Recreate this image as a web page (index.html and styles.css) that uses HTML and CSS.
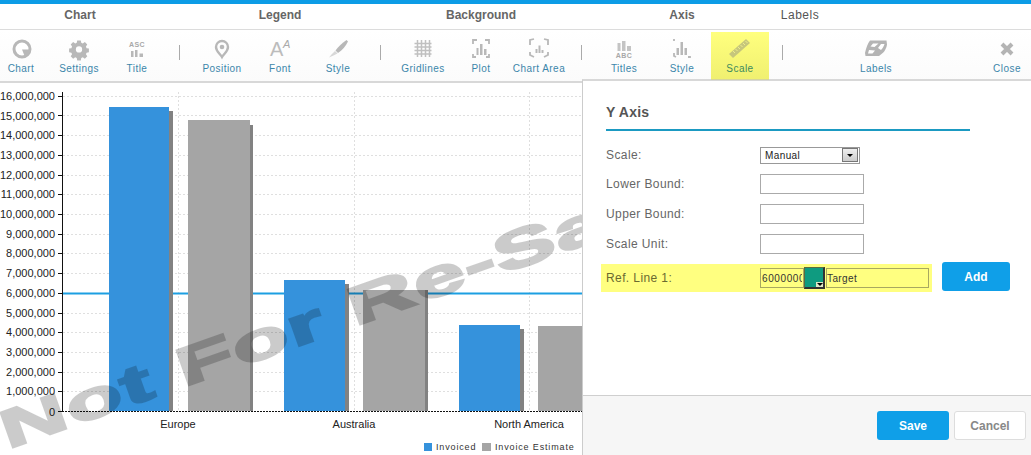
FILE: index.html
```html
<!DOCTYPE html>
<html lang="en">
<head>
<meta charset="utf-8">
<title>Chart Builder</title>
<link rel="stylesheet" href="styles.css">
</head>
<body>
<div class="app">
  <nav class="tabs">
    <span class="tab tab-chart">Chart</span>
    <span class="tab tab-legend">Legend</span>
    <span class="tab tab-background">Background</span>
    <span class="tab tab-axis">Axis</span>
    <span class="tab tab-labels">Labels</span>
  </nav>
  <div class="toolbar">
    <div class="tool"><svg class="icon" viewBox="0 0 28 26"><circle class="ico-ring" cx="15" cy="14" r="8"/><path class="ico-fill" d="M15 14.500h8a8 8 0 0 1-5 7.500z"/></svg><span>Chart</span></div>
    <div class="tool"><svg class="icon" viewBox="0 0 28 26"><path class="ico-fill" fill-rule="evenodd" d="M12 4h4l.5 2.700 1.700.7 2.300-1.500 2.700 2.700-1.500 2.300.7 1.700 2.600.5v4l-2.600.5-.7 1.700 1.500 2.300-2.700 2.700-2.300-1.500-1.700.7-.5 2.700h-4l-.5-2.700-1.700-.7-2.300 1.500-2.700-2.700 1.500-2.300-.7-1.700-2.600-.5v-4l2.600-.5.7-1.700-1.500-2.300 2.700-2.700 2.300 1.500 1.700-.7zM14 10.500a3.500 3.500 0 1 0 0 7 3.500 3.500 0 0 0 0-7z" transform="translate(1.400 1.800) scale(.9)"/></svg><span>Settings</span></div>
    <div class="tool"><svg class="icon" viewBox="0 0 28 26"><text class="ico-text" x="14" y="12" text-anchor="middle">ASC</text><path class="ico-fill" d="M8 16h2.500v6H8zM12 15h2.500v7H12zM16.500 18.500h3.500V22h-3.500z"/></svg><span>Title</span></div>
    <i class="sep"></i>
    <div class="tool"><svg class="icon" viewBox="0 0 28 26"><path class="ico-line" d="M14 22c-2-3.500-6-5.500-6-10a6 6 0 0 1 12 0c0 4.500-4 6.500-6 10z"/><circle class="ico-fill" cx="14" cy="12" r="2.300"/></svg><span>Position</span></div>
    <div class="tool"><svg class="icon" viewBox="0 0 28 26"><text class="ico-big" x="4" y="21">A</text><text class="ico-small" x="17" y="13">A</text></svg><span>Font</span></div>
    <div class="tool"><svg class="icon" viewBox="0 0 28 26"><path class="ico-fill" d="M22.500 5l1.500 1.500c-2 4.500-6 9-10 11.500l-2.500-2.500c3-4 7-8 11-10.500z"/><path class="ico-pale" d="M11 16l2.500 2.500-4 2-4.500 2 2.500-3z"/></svg><span>Style</span></div>
    <i class="sep"></i>
    <div class="tool"><svg class="icon" viewBox="0 0 28 26"><path class="ico-grid" d="M8.500 5v17M12.500 5v17M16.500 5v17M20.500 5v17M5.500 8.500h17M5.500 12h17M5.500 15.500h17M5.500 19h17"/></svg><span>Gridlines</span></div>
    <div class="tool"><svg class="icon" viewBox="0 0 28 26"><path class="ico-dash" d="M6 9V5h4M18 5h4v4M22 19v3h-3M9 22H6v-3"/><path class="ico-fill" d="M9.500 13h2v7h-2zM13 9h2.500v11H13zM17 14h2.500v6H17z"/></svg><span>Plot</span></div>
    <div class="tool"><svg class="icon" viewBox="0 0 28 26"><path class="ico-dash" d="M5 10V5l4-1M19 4l4 1v5M23 17v3l-4 2M9 22l-4-2v-3"/><path class="ico-fill" d="M10.500 14h2v4h-2zM13.500 10.500h2V18h-2zM16.500 15h2v3h-2z"/></svg><span>Chart Area</span></div>
    <i class="sep"></i>
    <div class="tool"><svg class="icon" viewBox="0 0 28 26"><path class="ico-pale2" d="M7.500 8h3v8h-3zM12 6h3.500v10H12zM17 11h4v5h-4z"/><text class="ico-text" x="14" y="23" text-anchor="middle">ABC</text></svg><span>Titles</span></div>
    <div class="tool"><svg class="icon" viewBox="0 0 28 26"><path class="ico-dash" d="M6 6V4M6 18v3l2 1M22 21v1h-2"/><path class="ico-fill" d="M8.500 13h2.500v7H8.500zM12.500 7H15v13h-2.500zM16.500 13H19v7h-2.500z"/></svg><span>Style</span></div>
    <div class="tool tool-active"><svg class="icon" viewBox="0 0 28 26"><path class="ico-ruler" d="M3 19L20 4l4 4L7 23z"/><path class="ico-ticks" d="M7 16l2 2M9.500 14l2 2M12 12l2 2M14.500 10l2 2M17 8l2 2M19.500 6l2 2"/></svg><span>Scale</span></div>
    <i class="sep"></i>
    <div class="tool tool-labels"><svg class="icon" viewBox="0 0 28 26"><path class="ico-shape" d="M8 5.500h16.500l.5 4c-.5 4-3 8-5.500 9.500l-2.500 2H3.500l-.5-3c1-5 3-10 5-12.500z"/><path class="ico-cut" d="M11 8.500h5.500l-4 3.500-4-.5zM7 15l6 .5-2.500 3H6zM19 9h3.500c-.5 2-2 4.500-3.500 6l-3-2z"/></svg><span>Labels</span></div>
    <div class="tool tool-close"><svg class="icon" viewBox="0 0 28 26"><path class="ico-x" d="M9 9l10 10M19 9L9 19"/></svg><span>Close</span></div>
  </div>

  <main class="chart">
    <svg class="plot" viewBox="0 83 582 372" width="582" height="372">
      <path class="grid" d="M63 96.500H582M63 115.500H582M63 135.500H582M63 155.500H582M63 175.500H582M63 194.500H582M63 214.500H582M63 234.500H582M63 253.500H582M63 273.500H582M63 313.500H582M63 332.500H582M63 352.500H582M63 372.500H582M63 391.500H582"/>
      <path class="grid" d="M178.500 92V411M354.500 92V411M529.500 92V411"/>
      <line class="ref" x1="62" y1="293.500" x2="582" y2="293.500"/>
      <path class="base" d="M62 411.500H582"/>
      <path class="ticks" d="M62.500 92V412M58 96.500h4M58 115.500h4M58 135.500h4M58 155.500h4M58 175.500h4M58 194.500h4M58 214.500h4M58 234.500h4M58 253.500h4M58 273.500h4M58 293.500h4M58 313.500h4M58 332.500h4M58 352.500h4M58 372.500h4M58 391.500h4M58 411.500h4"/>

      <rect class="shadow" x="113" y="111" width="60" height="300"/>
      <rect class="blue" x="109" y="107" width="60" height="304"/>
      <rect class="shadow" x="192" y="125" width="61" height="286"/>
      <rect class="gray" x="188" y="120" width="62" height="291"/>
      <rect class="shadow" x="288" y="284" width="61" height="127"/>
      <rect class="blue" x="284" y="280" width="61" height="131"/>
      <rect class="shadow" x="367" y="290" width="61" height="121"/>
      <rect class="gray" x="363" y="290" width="62" height="121"/>
      <rect class="shadow" x="463" y="329" width="61" height="82"/>
      <rect class="blue" x="459" y="325" width="61" height="86"/>
      <rect class="gray" x="538" y="326" width="44" height="85"/>

      <g class="ylabels">
        <text x="55" y="100">16,000,000</text>
        <text x="55" y="120">15,000,000</text>
        <text x="55" y="139">14,000,000</text>
        <text x="55" y="159">13,000,000</text>
        <text x="55" y="179">12,000,000</text>
        <text x="55" y="198">11,000,000</text>
        <text x="55" y="218">10,000,000</text>
        <text x="55" y="238">9,000,000</text>
        <text x="55" y="257">8,000,000</text>
        <text x="55" y="277">7,000,000</text>
        <text x="55" y="297">6,000,000</text>
        <text x="55" y="317">5,000,000</text>
        <text x="55" y="336">4,000,000</text>
        <text x="55" y="356">3,000,000</text>
        <text x="55" y="376">2,000,000</text>
        <text x="55" y="395">1,000,000</text>
        <text x="55" y="416">0</text>
      </g>
      <g class="xlabels">
        <text x="178" y="428">Europe</text>
        <text x="354" y="428">Australia</text>
        <text x="529" y="428">North America</text>
      </g>
      <rect class="blue" x="424" y="443" width="8" height="8"/>
      <text class="legend" x="436" y="450">Invoiced</text>
      <rect class="gray" x="482" y="443" width="9" height="8"/>
      <text class="legend" x="495" y="450">Invoice Estimate</text>

      <text class="watermark" transform="translate(8 449) rotate(-19.500) scale(1.6 .92)">Not For Re-Sale</text>
    </svg>
  </main>

  <aside class="panel">
    <div class="panel-body">
      <h2 class="panel-title">Y Axis</h2>
      <div class="row row-select">
        <label class="field-label">Scale:</label>
        <div class="select"><span>Manual</span><b class="select-arrow"></b></div>
      </div>
      <div class="row"><label class="field-label">Lower Bound:</label><input class="input" type="text"></div>
      <div class="row"><label class="field-label">Upper Bound:</label><input class="input" type="text"></div>
      <div class="row"><label class="field-label">Scale Unit:</label><input class="input" type="text"></div>
      <div class="ref-row">
        <div class="ref-band">
          <label class="field-label ref-label">Ref. Line 1:</label>
          <input class="input input-value" type="text" value="6000000">
          <div class="swatch"><b class="swatch-arrow"></b></div>
          <input class="input input-name" type="text" value="Target">
        </div>
        <button class="btn btn-primary btn-add">Add</button>
      </div>
    </div>
    <footer class="panel-footer">
      <button class="btn btn-primary btn-foot">Save</button>
      <button class="btn btn-cancel btn-foot">Cancel</button>
    </footer>
  </aside>
</div>
</body>
</html>
```
FILE: styles.css
```css
* { box-sizing: border-box; }
html, body { margin: 0; height: 100%; }
body {
  background: #fff;
  font-family: "Liberation Sans", Arial, sans-serif;
  overflow: hidden;
}
.app {
  position: relative;
  width: 1031px;
  height: 455px;
  overflow: hidden;
  border-top: 4px solid #0d9ce6;
}

/* tabs */
.tabs {
  display: flex;
  height: 26px;
  border-bottom: 1px solid #dcdcdc;
  align-items: center;
}
.tab {
  text-align: center;
  font-size: 12px;
  font-weight: bold;
  color: #666;
  padding-bottom: 4px;
}
.tab-chart { width: 160px; }
.tab-legend { width: 240px; }
.tab-background { width: 162px; }
.tab-axis { width: 120px; margin-left: 60px; }
.tab-labels { width: 116px; font-weight: normal; color: #555; letter-spacing: .5px; }

/* toolbar */
.toolbar {
  display: flex;
  height: 53px;
  margin-left: -8px;
  padding-top: 2px;
  border-bottom: 2px solid #d8d8d8;
  background: linear-gradient(#fff, #fbfbfb);
}
.tool {
  width: 58px;
  height: 48px;
  display: flex;
  flex-direction: column;
  align-items: center;
  padding-top: 3px;
  font-size: 10px;
  letter-spacing: .45px;
  color: #3b86aa;
}
.tool span { margin-top: 2px; line-height: 12px; white-space: nowrap; }
.icon { width: 28px; height: 26px; display: block; }
.tool-active {
  background: linear-gradient(#ffff7e, #f0f070);
  border-bottom: 1px solid #d6d69a;
  color: #3d8a5f;
  position: relative;
  z-index: 2;
  height: 48px;
}
.tool-labels { margin-left: 51px; }
.tool-close { margin-left: auto; width: 48px; }
.sep {
  width: 1px;
  height: 15px;
  margin: 13px 13px 0;
  background: #aaa;
}

/* icon paints */
.ico-fill { fill: #b8b8b8; }
.ico-pale2 { fill: #c4c4c4; }
.ico-ring { fill: #fff; stroke: #b8b8b8; stroke-width: 3; }
.ico-cut { fill: #fff; }
.ico-text { font-size: 7px; font-weight: bold; fill: #a8a8a8; letter-spacing: .4px; font-family: "Liberation Sans", sans-serif; }
.ico-line { fill: none; stroke: #b8b8b8; stroke-width: 2.400; }
.ico-big { font-size: 20px; fill: #bcbcbc; font-family: "Liberation Sans", sans-serif; }
.ico-small { font-size: 11px; font-style: italic; fill: #aaa; font-family: "Liberation Sans", sans-serif; }
.ico-pale { fill: #d8d8d8; }
.ico-grid { fill: none; stroke: #c0c0c0; stroke-width: 1.500; }
.ico-dash { fill: none; stroke: #b8b8b8; stroke-width: 1.800; }
.ico-ruler { fill: #c6c67c; }
.ico-ticks { fill: none; stroke: #eded8c; stroke-width: 1; }
.ico-shape { fill: #b4b4b4; }
.ico-x { fill: none; stroke: #b4b4b4; stroke-width: 4; }

/* chart */
.chart { width: 582px; height: 372px; }
.plot { display: block; }
.plot text { font-family: "Liberation Sans", Arial, sans-serif; }
.grid { fill: none; stroke: #dfdfdf; stroke-width: 1; stroke-dasharray: 2 2; }
.base { fill: none; stroke: #111; stroke-width: 1; stroke-dasharray: 2 1; }
.ticks { fill: none; stroke: #111; stroke-width: 1; }
.ref { stroke: #1c9fe2; stroke-width: 2; }
.blue { fill: #3592dc; }
.gray { fill: #a5a5a5; }
.shadow { fill: #828282; }
.ylabels text { font-size: 11px; fill: #222; text-anchor: end; }
.xlabels text { font-size: 11px; fill: #222; text-anchor: middle; }
.plot .legend { font-size: 9px; letter-spacing: .85px; fill: #333; }
.plot .watermark {
  font-size: 58px;
  font-weight: bold;
  letter-spacing: 1px;
  fill: #000;
  stroke: #000;
  stroke-width: 2.500px;
  opacity: .2;
}

/* panel */
.panel {
  position: absolute;
  left: 582px;
  top: 75px;
  width: 449px;
  height: 376px;
  background: #fff;
  border-top: 2px solid #d8d8d8;
  border-left: 1px solid #ccc;
  display: flex;
  flex-direction: column;
}
.panel-body { flex: 1; padding: 0 21px 0 18px; }
.panel-title {
  margin: 22px 0 0 5px;
  padding-bottom: 7px;
  width: 364px;
  box-sizing: content-box;
  height: 19px;
  font-size: 14px;
  line-height: 19px;
  font-weight: bold;
  color: #555;
  letter-spacing: .2px;
  border-bottom: 2px solid #1b9ac2;
}
.row {
  display: flex;
  align-items: center;
  height: 30px;
  padding-left: 5px;
}
.row-select { margin-top: 10px; height: 28px; }
.field-label {
  width: 154px;
  font-size: 12px;
  letter-spacing: .4px;
  color: #666;
}
.select {
  width: 100px;
  height: 17px;
  border: 1px solid #999;
  display: flex;
  align-items: center;
  justify-content: space-between;
  padding: 0 1px 0 4px;
  font-size: 10px;
  letter-spacing: .4px;
  color: #222;
}
.select-arrow {
  width: 16px;
  height: 14px;
  background: linear-gradient(#eee, #ccc);
  border: 1px solid #777;
  position: relative;
}
.select-arrow::after {
  content: "";
  position: absolute;
  left: 4px;
  top: 5px;
  border: 3px solid transparent;
  border-top-color: #000;
  border-bottom: 0;
}
.input {
  width: 104px;
  height: 20px;
  border: 1px solid #aaa;
  background: #fff;
  padding: 0 2px;
  font: 10px "Liberation Sans", Arial, sans-serif;
  letter-spacing: .4px;
  color: #333;
  outline: none;
}
.ref-row {
  display: flex;
  align-items: center;
  margin-top: 5px;
}
.ref-band {
  display: flex;
  align-items: center;
  width: 331px;
  height: 28px;
  padding-left: 5px;
  background: #ffff80;
}
.ref-label { color: #6a6a30; }
.input-value { width: 44px; background: #ffff80; border-color: #a8a860; padding: 0 1px; letter-spacing: .6px; }
.input-name { width: 103px; background: #ffff80; border-color: #a8a860; padding: 0 1px 0 0; }
.swatch {
  width: 21px;
  height: 22px;
  margin-right: 1px;
  background: #0f9b80;
  border: 1px solid #5b6b40;
  border-right: 2px solid #333;
  border-bottom: 2px solid #333;
  position: relative;
}
.swatch-arrow {
  position: absolute;
  right: 0;
  bottom: 0;
  width: 7px;
  height: 5px;
  background: #dfe8c8;
}
.swatch-arrow::after {
  content: "";
  position: absolute;
  left: 1px;
  top: 1px;
  border: 3px solid transparent;
  border-top-color: #000;
  border-bottom: 0;
}
.btn {
  font: bold 12px "Liberation Sans", Arial, sans-serif;
  border-radius: 3px;
  cursor: pointer;
}
.btn-primary { background: #0f9fe8; color: #fff; border: 0; }
.btn-add { width: 68px; height: 29px; margin-left: 10px; margin-top: -3px; }
.btn-foot { width: 72px; height: 29px; }
.btn-cancel { background: #fff; color: #888; border: 1px solid #ddd; }
.panel-footer {
  height: 60px;
  background: #f6f6f6;
  border-top: 1px solid #cfcfcf;
  display: flex;
  justify-content: flex-end;
  align-items: flex-start;
  gap: 5px;
  padding: 15px 5px 0 0;
}
```
